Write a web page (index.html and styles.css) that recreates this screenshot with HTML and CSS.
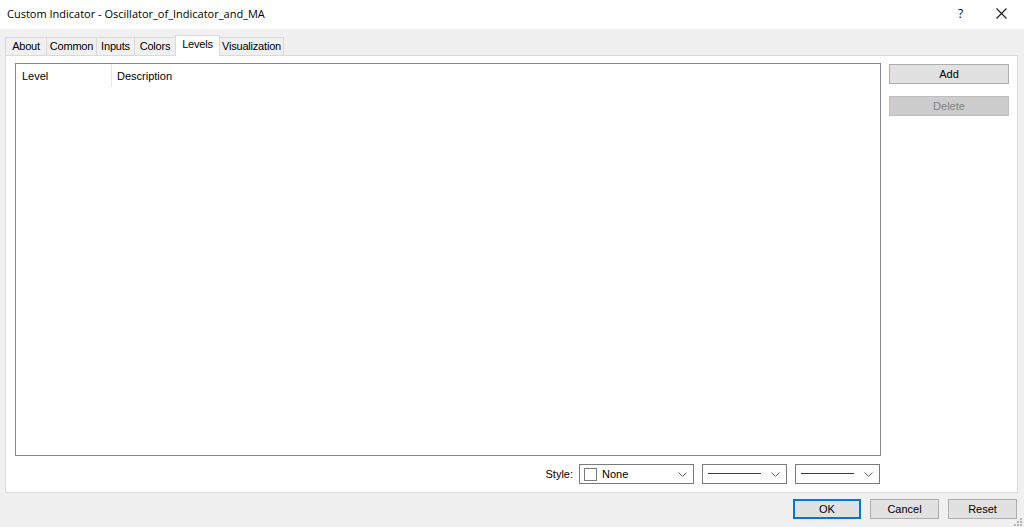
FILE: index.html
```html
<!DOCTYPE html>
<html>
<head>
<meta charset="utf-8">
<link rel="stylesheet" href="styles.css">
</head>
<body>
<div class="window">
  <div class="titlebar">
    <div class="title">Custom Indicator - Oscillator_of_Indicator_and_MA</div>
    <div class="help">?</div>
    <div class="close">
      <svg width="11" height="11" viewBox="0 0 11 11"><path d="M0.5 0.5 L10.5 10.5 M10.5 0.5 L0.5 10.5" stroke="#1a1a1a" stroke-width="1.1" fill="none"/></svg>
    </div>
  </div>
  <div class="tabs">
    <div class="tab t-about">About</div>
    <div class="tab t-common">Common</div>
    <div class="tab t-inputs">Inputs</div>
    <div class="tab t-colors">Colors</div>
    <div class="tab t-levels active">Levels</div>
    <div class="tab t-vis">Visualization</div>
  </div>
  <div class="panel">
    <div class="leftcol">
      <div class="list">
        <div class="listhead">
          <div class="col col-level">Level</div>
          <div class="col col-desc">Description</div>
        </div>
      </div>
      <div class="stylerow">
        <span class="stylelabel">Style:</span>
        <div class="combo c1">
          <span class="check"></span>
          <span class="ctext">None</span>
          <span class="chev"><svg width="9" height="6" viewBox="0 0 9 6"><path d="M0.5 0.5 L4.5 4.5 L8.5 0.5" stroke="#606060" stroke-width="1" fill="none"/></svg></span>
        </div>
        <div class="combo c2">
          <span class="line"></span>
          <span class="chev"><svg width="9" height="6" viewBox="0 0 9 6"><path d="M0.5 0.5 L4.5 4.5 L8.5 0.5" stroke="#606060" stroke-width="1" fill="none"/></svg></span>
        </div>
        <div class="combo c3">
          <span class="line"></span>
          <span class="chev"><svg width="9" height="6" viewBox="0 0 9 6"><path d="M0.5 0.5 L4.5 4.5 L8.5 0.5" stroke="#606060" stroke-width="1" fill="none"/></svg></span>
        </div>
      </div>
    </div>
    <div class="rightcol">
      <div class="btn">Add</div>
      <div class="btn disabled">Delete</div>
    </div>
  </div>
  <div class="footer">
    <div class="btn fbtn default">OK</div>
    <div class="btn fbtn">Cancel</div>
    <div class="btn fbtn">Reset</div>
    <div class="grip">
      <svg width="10" height="10" viewBox="0 0 10 10" fill="#b4b4b4">
        <rect x="7" y="1" width="2" height="2"/>
        <rect x="4" y="4" width="2" height="2"/><rect x="7" y="4" width="2" height="2"/>
        <rect x="1" y="7" width="2" height="2"/><rect x="4" y="7" width="2" height="2"/><rect x="7" y="7" width="2" height="2"/>
      </svg>
    </div>
  </div>
</div>
</body>
</html>
```
FILE: styles.css
```css
html, body {
  margin: 0;
  padding: 0;
}
body {
  width: 1024px;
  height: 527px;
  overflow: hidden;
  background: #f0f0f0;
  font-family: "Liberation Sans", Arial, sans-serif;
  font-size: 11px;
  color: #000;
}
.window {
  display: flex;
  flex-direction: column;
  width: 1024px;
  height: 527px;
}
.titlebar {
  height: 26px;
  background: #fff;
  display: flex;
  align-items: center;
  padding-left: 7px;
  padding-bottom: 3px;
}
.title {
  font-family: "Open Sans", "Liberation Sans", sans-serif;
  font-size: 11px;
  color: #000;
  flex: 1;
}
.help {
  font-family: "Open Sans", sans-serif;
  font-size: 12px;
  width: 8px;
  margin-right: 30px;
}
.close {
  width: 11px;
  height: 11px;
  margin-right: 17px;
  display: flex;
}
.tabs {
  display: flex;
  align-items: flex-end;
  height: 20px;
  margin-top: 6px;
  padding-left: 5px;
  position: relative;
  z-index: 1;
}
.tab {
  height: 18px;
  border: 1px solid #d9d9d9;
  border-bottom: none;
  margin-right: -1px;
  background: #f0f0f0;
  display: flex;
  align-items: center;
  justify-content: center;
  color: #000;
  letter-spacing: -0.2px;
  box-sizing: border-box;
  padding-bottom: 2px;
}
.tab.active {
  height: 21px;
  background: #fff;
  margin-bottom: -1px;
  padding-bottom: 4px;
}
.t-about { width: 42px; }
.t-common { width: 51px; }
.t-inputs { width: 39px; }
.t-colors { width: 42px; }
.t-levels { width: 45px; }
.t-vis { width: 65px; }
.panel {
  margin: 0 6px 0 5px;
  height: 438px;
  box-sizing: border-box;
  background: #fff;
  border: 1px solid #d9d9d9;
  display: flex;
  padding: 7px 0 0 9px;
  gap: 8px;
}
.leftcol {
  width: 866px;
  display: flex;
  flex-direction: column;
}
.list {
  height: 393px;
  box-sizing: border-box;
  border: 1px solid #828790;
  background: #fff;
}
.listhead {
  display: flex;
  height: 23px;
  align-items: stretch;
}
.col {
  display: flex;
  align-items: center;
  padding-left: 6px;
  box-sizing: border-box;
}
.col-level {
  width: 96px;
  border-right: 1px solid #e5e5e5;
}
.col-desc {
  flex: 1;
  padding-left: 5px;
}
.stylerow {
  display: flex;
  justify-content: flex-end;
  align-items: center;
  margin-top: 8px;
  height: 20px;
  padding-right: 1px;
}
.stylelabel {
  margin-right: 6px;
  color: #000;
}
.combo {
  height: 20px;
  box-sizing: border-box;
  border: 1px solid #7a7a7a;
  background: #fff;
  display: flex;
  align-items: center;
  margin-left: 8px;
}
.combo.c1 { width: 115px; margin-left: 0; }
.combo.c2 { width: 85px; }
.combo.c3 { width: 85px; }
.check {
  width: 11px;
  height: 11px;
  border: 1px solid #7a7a7a;
  margin-left: 4px;
  margin-right: 5px;
  flex: none;
}
.ctext {
  flex: 1;
}
.line {
  flex: 1;
  height: 1px;
  border-top: 1px solid #3c3c3c;
  margin-left: 5px;
  margin-right: 10px;
}
.chev {
  width: 9px;
  height: 6px;
  display: flex;
  margin-right: 6px;
  margin-top: 1px;
}
.rightcol {
  display: flex;
  flex-direction: column;
  gap: 12px;
  padding-top: 1px;
}
.btn {
  width: 120px;
  height: 20px;
  box-sizing: border-box;
  border: 1px solid #adadad;
  background: #e1e1e1;
  display: flex;
  align-items: center;
  justify-content: center;
  color: #000;
}
.btn.disabled {
  background: #cccccc;
  border-color: #bfbfbf;
  color: #838383;
}
.footer {
  display: flex;
  align-items: flex-start;
  padding-top: 6px;
  padding-left: 793px;
  gap: 9px;
  position: relative;
}
.fbtn {
  width: 69px;
}
.fbtn.default {
  width: 68px;
  border: 1px solid #0078d7;
  box-shadow: inset 0 0 0 1px #0078d7;
}
.grip {
  position: absolute;
  right: 1px;
  top: 24px;
  width: 10px;
  height: 10px;
}
```
